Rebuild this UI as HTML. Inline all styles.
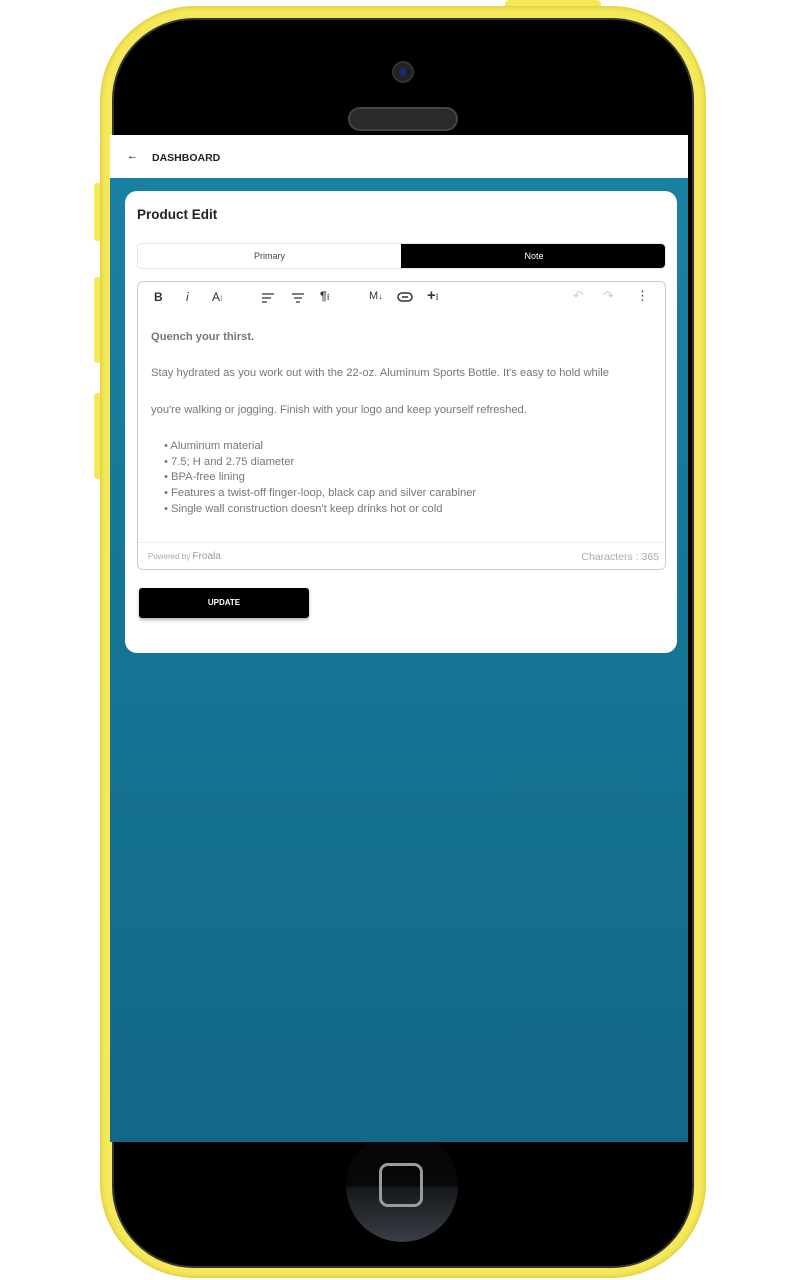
<!DOCTYPE html>
<html><head><meta charset="utf-8"><style>
*{margin:0;padding:0;box-sizing:border-box}
body{width:800px;height:1280px;background:#fff;position:relative;overflow:hidden;font-family:"Liberation Sans",sans-serif}
.abs{position:absolute}
.body{left:100px;top:6px;width:606px;height:1272px;border-radius:95px;background:#f5e85a;box-shadow:inset 0 0 6px #c9b92a}
.bezel{left:112px;top:18px;width:582px;height:1250px;border-radius:82px;background:#000;border:2px solid #333}
.screen{left:110px;top:135px;width:578px;height:1007px;background:linear-gradient(#1a81a4,#126886)}
.hdr{left:0;top:0;width:578px;height:43px;background:#fff}
.card{left:15px;top:56px;width:552px;height:462px;background:#fff;border-radius:12px}
.tb{font-size:13px;color:#333}
.ed p{font-size:11.2px;color:#777;position:absolute;left:13px;white-space:nowrap}
</style></head><body>
<div class="abs" style="left:505px;top:0;width:96px;height:9px;background:#f5e85a;border-radius:4px"></div>
<div class="abs" style="left:94px;top:183px;width:8px;height:58px;background:#f5e85a;border-radius:3px"></div>
<div class="abs" style="left:94px;top:277px;width:8px;height:86px;background:#f5e85a;border-radius:3px"></div>
<div class="abs" style="left:94px;top:393px;width:8px;height:86px;background:#f5e85a;border-radius:3px"></div>
<div class="abs body"></div>
<div class="abs bezel"></div>
<div class="abs" style="left:392px;top:61px;width:22px;height:22px;border-radius:50%;background:#222;border:2px solid #333"><div style="margin:5px;width:8px;height:8px;border-radius:50%;background:#1a2a70"></div></div>
<div class="abs" style="left:348px;top:107px;width:110px;height:24px;border-radius:12px;background:#2a2a2a;border:2px solid #444"></div>
<div class="abs" style="left:346px;top:1130px;width:112px;height:112px;border-radius:50%;background:linear-gradient(#050505 0%,#080808 50%,#15181c 51%,#3a3e45 100%)"></div>
<div class="abs" style="left:379px;top:1163px;width:44px;height:44px;border-radius:9px;border:3px solid #9a9a9a"></div>
<div class="abs screen">
 <div class="abs hdr"><span class="abs" style="left:17px;top:15px;font-size:11px">←</span><span class="abs" style="left:42px;top:17px;font-size:10.5px;font-weight:bold;color:#222">DASHBOARD</span></div>
 <div class="abs card">
  <div class="abs" style="left:12px;top:16px;font-size:13.5px;font-weight:bold;color:#222">Product Edit</div>
  <div class="abs" style="left:12px;top:52px;width:529px;height:26px;border:1px solid #e6e6e6;border-radius:5px;overflow:hidden">
   <div class="abs" style="left:0;top:0;width:263px;height:26px;font-size:9px;color:#444;text-align:center;line-height:25px">Primary</div>
   <div class="abs" style="left:263px;top:-1px;width:266px;height:27px;background:#000;color:#fff;font-size:9px;text-align:center;line-height:26px">Note</div>
  </div>
  <div class="abs ed" style="left:12px;top:90px;width:529px;height:289px;border:1px solid #ccc;border-radius:6px">
   <span class="abs tb" style="left:16px;top:8px;font-weight:bold;font-size:12px">B</span>
   <span class="abs tb" style="left:48px;top:8px;font-style:italic;font-size:12px">i</span>
   <span class="abs tb" style="left:74px;top:8px;font-size:12px">A<small style="font-size:8px">⁝</small></span>
   <svg class="abs" style="left:123px;top:10px" width="14" height="12" stroke="#333" stroke-width="1.3"><path d="M1 2H13M1 6H10M1 10H6"/></svg>
   <svg class="abs" style="left:153px;top:10px" width="14" height="12" stroke="#333" stroke-width="1.3"><path d="M1 2H13M3 6H11M5 10H9"/></svg>
   <span class="abs tb" style="left:182px;top:7px;font-size:12px;font-weight:bold">¶<span style="font-size:9px">⁝</span></span>
   <span class="abs tb" style="left:231px;top:8px;font-size:11px">M<span style="font-size:9px">↓</span></span>
   <svg class="abs" style="left:259px;top:10px" width="16" height="10" fill="none" stroke="#333" stroke-width="1.5"><rect x="1" y="1" width="14" height="8" rx="4"/><path d="M5 5H11"/></svg>
   <span class="abs tb" style="left:289px;top:5px;font-size:15px;font-weight:bold">+<span style="font-size:9px">⁝</span></span>
   <span class="abs tb" style="left:435px;top:6px;color:#ccc">↶</span>
   <span class="abs tb" style="left:465px;top:6px;color:#ccc">↷</span>
   <span class="abs tb" style="left:498px;top:6px">⋮</span>
   <p style="top:49px;font-weight:bold">Quench your thirst.</p>
   <p style="top:85px">Stay hydrated as you work out with the 22-oz. Aluminum Sports Bottle. It's easy to hold while</p>
   <p style="top:122px">you're walking or jogging. Finish with your logo and keep yourself refreshed.</p>
   <p style="top:157px;left:26px;line-height:15.7px">• Aluminum material<br>• 7.5; H and 2.75 diameter<br>• BPA-free lining<br>• Features a twist-off finger-loop, black cap and silver carabiner<br>• Single wall construction doesn't keep drinks hot or cold</p>
   <div class="abs" style="left:0;top:260px;width:527px;border-top:1px solid #eee"></div>
   <span class="abs" style="left:10px;top:269px;font-size:8px;color:#aaa">Powered by <span style="font-size:10px;color:#999">Froala</span></span>
   <span class="abs" style="right:6px;top:269px;font-size:10.5px;color:#aaa">Characters : 365</span>
  </div>
  <div class="abs" style="left:14px;top:397px;width:170px;height:30px;background:#000;border-radius:3px;box-shadow:0 2px 3px rgba(0,0,0,.3);color:#fff;font-size:8px;font-weight:bold;text-align:center;line-height:30px">UPDATE</div>
 </div>
</div>
</body></html>
